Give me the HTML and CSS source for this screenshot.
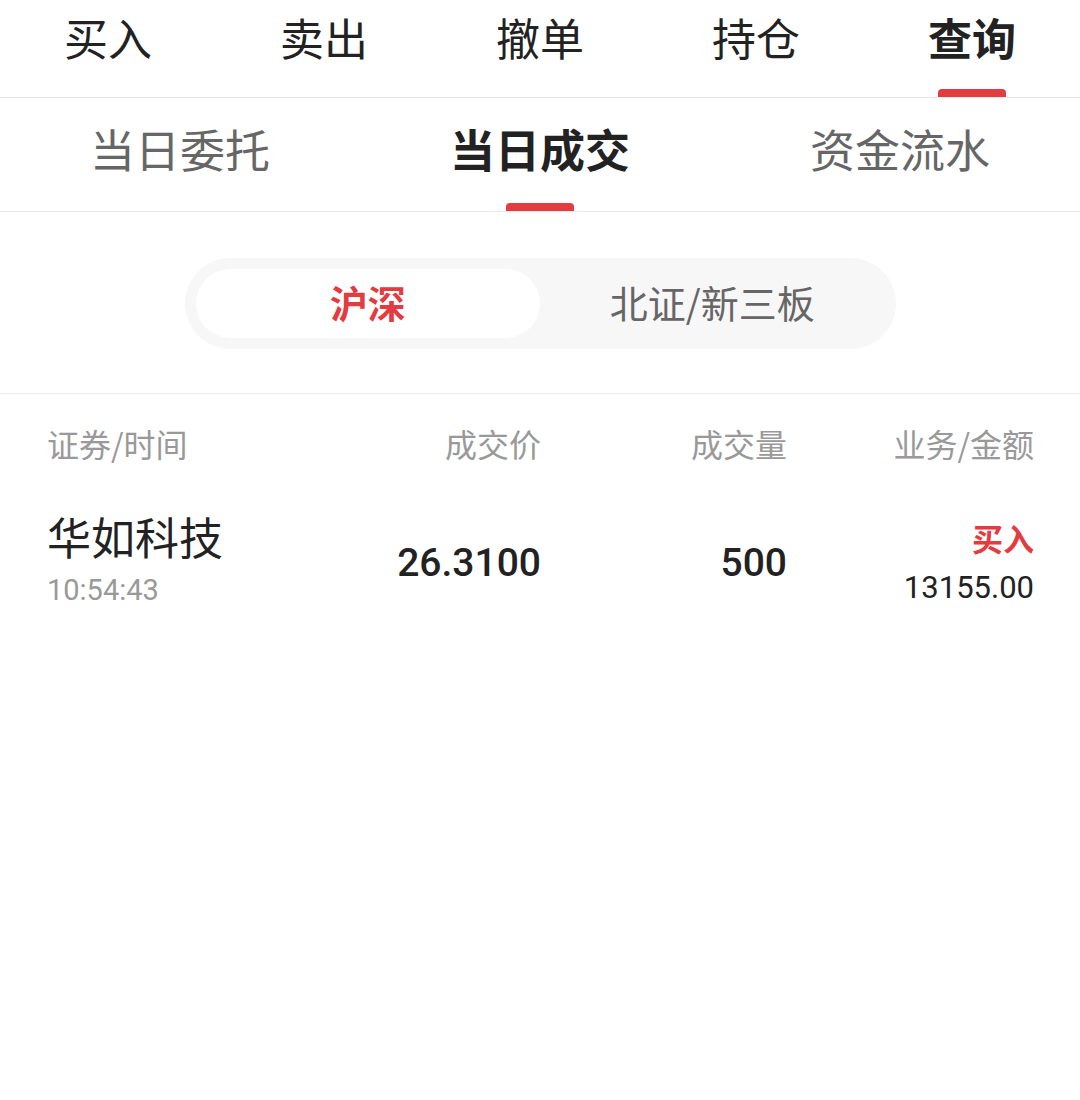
FILE: index.html
```html
<!doctype html>
<html>
<head>
	<meta charset="utf-8">
	<title>查询 - 当日成交</title>
	<link rel="stylesheet" href="styles.css">
</head>
<body>

	<div class="tabs main-tabs">
		<div class="tab">买入</div>
		<div class="tab">卖出</div>
		<div class="tab">撤单</div>
		<div class="tab">持仓</div>
		<div class="tab active">查询<span class="bar"></span></div>
	</div>

	<div class="tabs sub-tabs">
		<div class="tab">当日委托</div>
		<div class="tab active">当日成交<span class="bar"></span></div>
		<div class="tab">资金流水</div>
	</div>

	<div class="seg-wrap">
		<div class="seg">
			<div class="seg-item on">沪深</div>
			<div class="seg-item">北证/新三板</div>
		</div>
	</div>

	<div class="grid head">
		<div>证券/时间</div>
		<div class="r">成交价</div>
		<div class="r">成交量</div>
		<div class="r">业务/金额</div>
	</div>

	<div class="grid row">
		<div>
			<div class="name">华如科技</div>
			<div class="time">10:54:43</div>
		</div>
		<div class="r num">26.3100</div>
		<div class="r num">500</div>
		<div class="r">
			<div class="side">买入</div>
			<div class="amt">13155.00</div>
		</div>
	</div>

</body>
</html>
```

FILE: styles.css
```css
body{
	margin: 0;
	padding: 0;
	background: #fff;
	color: #222;
	font-family: "Noto Sans CJK SC", "Noto Sans", sans-serif;
}
.tabs{
	display: grid;
	border-bottom: 1px solid #e8e8e8;
}
.tab{
	display: flex;
	flex-direction: column;
	align-items: center;
	color: #222;
}
.tab .bar{
	margin-top: auto;
	width: 68px;
	height: 8px;
	border-radius: 4px 4px 0 0;
	background: #e23b40;
}
.main-tabs{
	grid-template-columns: repeat(5, 1fr);
	height: 97px;
}
.main-tabs .tab{
	padding-top: 14px;
	font-size: 44px;
	line-height: 46px;
}
.main-tabs .active{
	font-weight: bold;
}
.sub-tabs{
	grid-template-columns: repeat(3, 1fr);
	height: 113px;
}
.sub-tabs .tab{
	padding-top: 27px;
	font-size: 45px;
	line-height: 48px;
	color: #666;
}
.sub-tabs .active{
	color: #222;
	font-weight: bold;
}
.seg-wrap{
	padding: 46px 0 44px;
	border-bottom: 1px solid #eee;
	display: flex;
	justify-content: center;
}
.seg{
	width: 711px;
	box-sizing: border-box;
	padding: 11px;
	border-radius: 46px;
	background: #f7f7f7;
	display: grid;
	grid-template-columns: 1fr 1fr;
}
.seg-item{
	height: 69px;
	line-height: 66px;
	text-align: center;
	font-size: 38px;
	color: #666;
	border-radius: 35px;
}
.seg-item.on{
	background: #fff;
	color: #e23b40;
	font-weight: bold;
}
.grid{
	display: grid;
	grid-template-columns: 248px 246px 246px 247px;
	padding: 0 46px 0 47px;
	align-items: start;
}
.r{
	text-align: right;
}
.head{
	box-sizing: border-box;
	height: 100px;
	padding-top: 29px;
	font-size: 32px;
	line-height: 40px;
	color: #999;
}
.row{
	padding-top: 24px;
}
.name{
	margin-top: -5px;
	font-size: 44px;
	line-height: 46px;
	color: #222;
}
.time{
	margin-top: 13px;
	font-family: Roboto, "Noto Sans CJK SC", sans-serif;
	font-size: 29px;
	line-height: 36px;
	color: #999;
}
.num{
	padding-top: 20px;
	font-family: Roboto, "Noto Sans CJK SC", sans-serif;
	font-size: 39px;
	line-height: 50px;
	font-weight: 500;
	color: #222;
}
.side{
	font-size: 31px;
	line-height: 40px;
	font-weight: bold;
	color: #e23b40;
}
.amt{
	margin-top: 8px;
	font-family: Roboto, "Noto Sans CJK SC", sans-serif;
	font-size: 31px;
	line-height: 44px;
	color: #222;
}
```
